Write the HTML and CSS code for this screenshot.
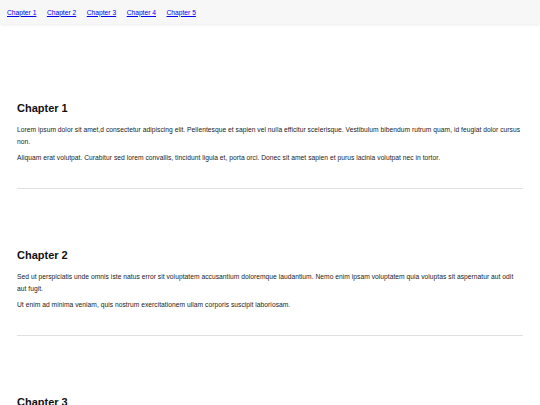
FILE: index.html
```html
<!DOCTYPE html>
<html lang="en">
<head>
<meta charset="utf-8">
<title>Chapters</title>
<link rel="stylesheet" href="styles.css">
</head>
<body>
<nav class="topnav">
  <a href="#c1">Chapter 1</a>
  <a href="#c2">Chapter 2</a>
  <a href="#c3">Chapter 3</a>
  <a href="#c4">Chapter 4</a>
  <a href="#c5">Chapter 5</a>
</nav>
<main class="content">
  <section class="chapter" id="c1">
    <h2>Chapter 1</h2>
    <p>Lorem ipsum dolor sit amet,d consectetur adipiscing elit. Pellentesque et sapien vel nulla efficitur scelerisque. Vestibulum bibendum rutrum quam, id feugiat dolor cursus non.</p>
    <p>Aliquam erat volutpat. Curabitur sed lorem convallis, tincidunt ligula et, porta orci. Donec sit amet sapien et purus lacinia volutpat nec in tortor.</p>
  </section>
  <section class="chapter" id="c2">
    <h2>Chapter 2</h2>
    <p>Sed ut perspiciatis unde omnis iste natus error sit voluptatem accusantium doloremque laudantium. Nemo enim ipsam voluptatem quia voluptas sit aspernatur aut odit aut fugit.</p>
    <p>Ut enim ad minima veniam, quis nostrum exercitationem ullam corporis suscipit laboriosam.</p>
  </section>
  <section class="chapter" id="c3">
    <h2>Chapter 3</h2>
    <p>Quis autem vel eum iure reprehenderit qui in ea voluptate velit esse quam nihil molestiae consequatur.</p>
  </section>
</main>
</body>
</html>
```
FILE: styles.css
```css
html, body {
  margin: 0;
  padding: 0;
  background: #ffffff;
}
body {
  font-family: "Liberation Sans", Arial, sans-serif;
  color: #222222;
}
.topnav {
  height: 24px;
  background: #f7f7f7;
  box-shadow: 0 1px 3px rgba(0, 0, 0, 0.08);
  display: flex;
  align-items: center;
  gap: 10.5px;
  padding: 0 7px;
  font-size: 6.7px;
}
.topnav a {
  color: #0000ee;
  text-decoration: underline;
}
.content {
  padding: 18px 17px 0;
}
.chapter {
  padding: 59px 0 24px;
  border-bottom: 1px solid #e0e0e0;
}
.chapter h2 {
  margin: 0 0 9px;
  font-size: 11px;
  line-height: 14px;
  font-weight: bold;
  color: #111111;
}
.chapter p {
  margin: 0 0 4px;
  font-size: 6.7px;
  line-height: 12px;
  letter-spacing: 0.03px;
}
.chapter p:last-child {
  margin-bottom: 0;
}
```
